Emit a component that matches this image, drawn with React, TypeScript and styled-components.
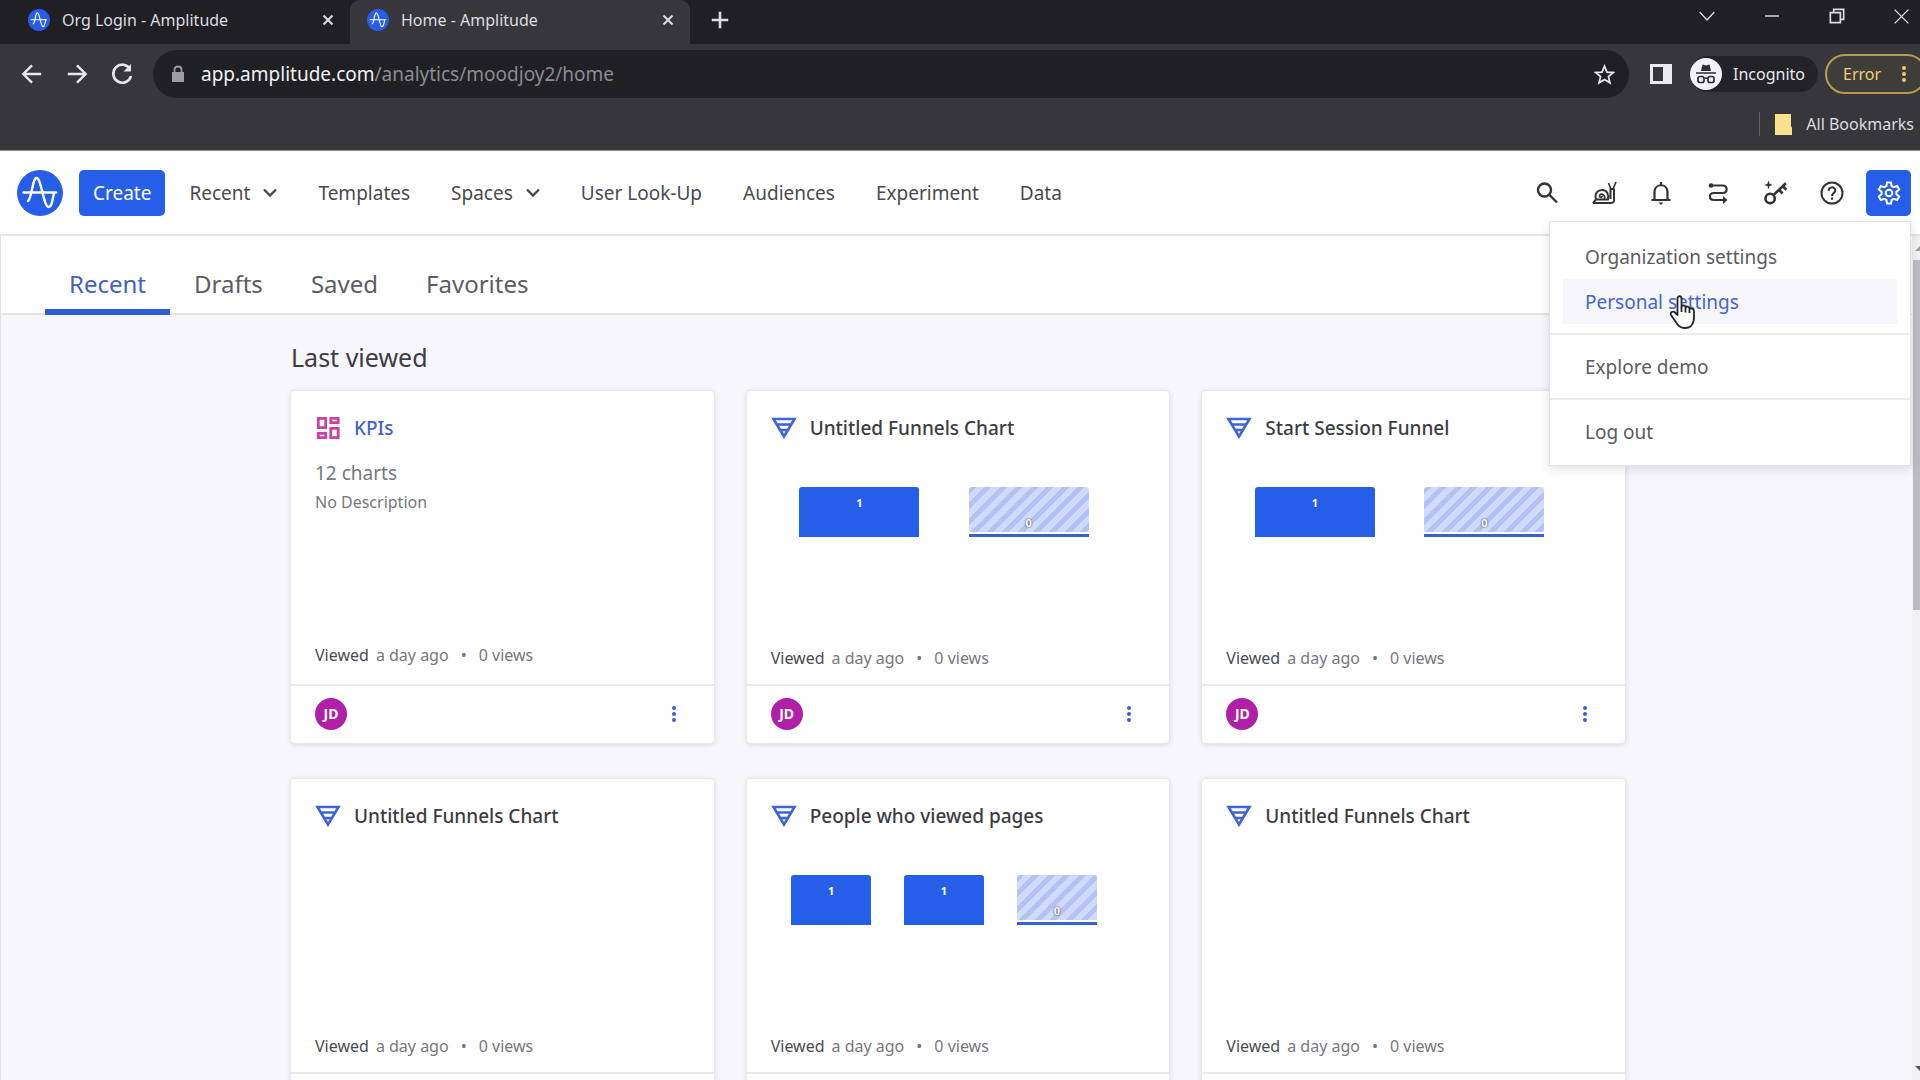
import React from "react";
import styled, { createGlobalStyle } from "styled-components";

const F = { ui: '"Noto Sans", "Open Sans", sans-serif' };

const Global = createGlobalStyle`
  * { box-sizing: border-box; }
  html, body, #root { height: 100%; }
  body { margin: 0; overflow: hidden; font-family: ${F.ui}; color: #3a3a40; }
  button { border: 0; background: none; padding: 0; margin: 0; font: inherit; color: inherit; cursor: pointer; }
  a { color: inherit; text-decoration: none; }
  h1, h2, p, ul { margin: 0; padding: 0; font-weight: 400; list-style: none; }
  svg { display: block; flex: none; }
`;

const Page = styled.div`
  display: flex;
  flex-direction: column;
  height: 100%;
  overflow: hidden;
`;

/* ---------- browser chrome ---------- */

const TabStrip = styled.div`
  display: flex;
  height: 44px;
  flex: none;
  background: #202024;
  color: #dcdce0;
`;

const BrowserTab = styled.div<{ $active?: boolean }>`
  display: flex;
  align-items: center;
  gap: 12px;
  width: ${(p) => (p.$active ? 340 : 350)}px;
  padding: 0 16px 4px ${(p) => (p.$active ? 17 : 28)}px;
  border-radius: 10px 10px 0 0;
  background: ${(p) => (p.$active ? "#37373b" : "transparent")};
  font-size: 16px;
  line-height: 24px;
`;

const TabTitle = styled.span`
  flex: 1;
  white-space: nowrap;
`;

const NewTab = styled.button`
  width: 60px;
  height: 40px;
  display: grid;
  place-items: center;
`;

const WindowControls = styled.div`
  display: flex;
  margin-left: auto;
  margin-right: -14px;
  height: 32px;
`;

const WindowButton = styled.button`
  width: 65px;
  display: grid;
  place-items: center;
`;

const Toolbar = styled.div`
  display: flex;
  align-items: center;
  flex: none;
  height: 60px;
  padding-left: 9px;
  background: #37373b;
  color: #e8e8ec;
  overflow: hidden;
`;

const NavButton = styled.button`
  width: 45px;
  height: 44px;
  display: grid;
  place-items: center;
`;

const AddressBar = styled.div`
  display: flex;
  align-items: center;
  flex: 1;
  height: 48px;
  margin-left: 9px;
  padding: 0 14px 0 18px;
  border-radius: 24px;
  background: #202024;
`;

const Address = styled.span`
  flex: 1;
  margin-left: 16px;
  font-size: 19px;
  line-height: 28px;
  color: #8b8b90;
  b { font-weight: 400; color: #f0f0f4; }
`;

const SidePanelButton = styled.button`
  width: 22px;
  margin: 0 18px 0 21px;
`;

const Incognito = styled.div`
  display: flex;
  align-items: center;
  gap: 11px;
  height: 36px;
  padding-right: 13px;
  border-radius: 18px;
  background: #232327;
  font-size: 16px;
`;

const ErrorButton = styled.button`
  display: flex;
  align-items: center;
  gap: 20px;
  flex: none;
  width: 102px;
  height: 40px;
  margin: 0 -7px 0 7px;
  padding-left: 16px;
  border: 2px solid #b99c4f;
  border-radius: 20px;
  background: #3f3d39;
  color: #f0cd77;
  font-size: 16px;
`;

const BookmarksBar = styled.div`
  display: flex;
  align-items: center;
  justify-content: flex-end;
  flex: none;
  height: 47px;
  padding: 0 6px 6px 0;
  border-bottom: 1px solid #8d8d90;
  background: #37373b;
  color: #dcdce0;
  font-size: 16px;
`;

const BookmarkFolder = styled.a`
  display: flex;
  align-items: center;
  gap: 14px;
  padding-left: 15px;
  border-left: 1px solid #66666b;
  line-height: 24px;
`;

/* ---------- application header ---------- */

const Header = styled.header`
  position: relative;
  z-index: 2;
  display: flex;
  align-items: center;
  flex: none;
  height: 85px;
  padding: 0 9px 0 17px;
  border-bottom: 2px solid #e6e6e9;
  background: #fff;
  font-size: 19px;
  line-height: 24px;
  color: #4a4a50;
`;

const CreateButton = styled.button`
  height: 46px;
  margin-left: 16px;
  padding: 0 14px;
  border-radius: 5px;
  background: #265eea;
  color: #fff;
`;

const MainNav = styled.nav`
  display: flex;
  margin-left: 24px;
  gap: 41px;
`;

const NavItem = styled.a`
  display: flex;
  align-items: center;
  gap: 13px;
  white-space: nowrap;
`;

const IconRow = styled.div`
  display: flex;
  gap: 12px;
  margin-left: auto;
`;

const IconButton = styled.button<{ $active?: boolean }>`
  display: grid;
  place-items: center;
  width: 45px;
  height: 46px;
  border-radius: 5px;
  background: ${(p) => (p.$active ? "#265eea" : "transparent")};
  color: ${(p) => (p.$active ? "#fff" : "#333338")};
`;

const Menu = styled.div`
  position: absolute;
  top: 70px;
  right: 9px;
  width: 362px;
  padding: 3px 0 2px;
  border: 1px solid #e3e3e6;
  background: #fff;
  box-shadow: 0 3px 10px rgba(40, 40, 60, 0.14);
  color: #5b5b62;
`;

const MenuGroup = styled.div`
  display: flex;
  flex-direction: column;
  padding: 9px 13px;
  & + & { border-top: 2px solid #ececef; }
`;

const MenuItem = styled.a<{ $hover?: boolean }>`
  display: flex;
  align-items: center;
  height: 45px;
  padding-left: 22px;
  background: ${(p) => (p.$hover ? "#f7f6fa" : "transparent")};
  color: ${(p) => (p.$hover ? "#4464d0" : "inherit")};
`;

const Pointer = styled.svg`
  position: absolute;
  top: 73px;
  left: 119px;
`;

/* ---------- page body ---------- */

const Body = styled.div`
  display: flex;
  flex: 1;
  min-height: 0;
`;

const Main = styled.main`
  flex: 1;
  min-width: 0;
  overflow: hidden;
  border-left: 1px solid #e3e3e6;
  background: #f7f6fb;
`;

const Tabs = styled.nav`
  display: flex;
  height: 79px;
  padding: 0 44px;
  border-bottom: 2px solid #e4e3e8;
  background: #fff;
`;

const Tab = styled.a<{ $active?: boolean }>`
  height: 79px;
  padding: 30px 24px 0;
  border-bottom: 6px solid ${(p) => (p.$active ? "#2f5fd8" : "transparent")};
  color: ${(p) => (p.$active ? "#4460c4" : "#5d5d64")};
  font-size: 24px;
  line-height: 36px;
`;

const Content = styled.section`
  padding: 24px 287px 0 290px;
`;

const Heading = styled.h1`
  font-size: 25px;
  line-height: 36px;
  margin-bottom: 16px;
  color: #3c3c44;
`;

const CardGrid = styled.div`
  display: grid;
  grid-template-columns: repeat(3, 1fr);
  gap: 36px 33px;
`;

const CardBox = styled.article`
  display: flex;
  flex-direction: column;
  border-radius: 4px;
  background: #fff;
  box-shadow: 0 0 0 1px #e8e7ec, 0 1px 5px 1px rgba(40, 40, 70, 0.12);
`;

const CardBody = styled.div<{ $kpi?: boolean }>`
  display: flex;
  flex-direction: column;
  height: 293px;
  padding: 22px 24px ${(p) => (p.$kpi ? 17 : 14)}px;
`;

const CardTitle = styled.h2<{ $link?: boolean }>`
  display: flex;
  align-items: center;
  gap: 13px;
  font-size: 19px;
  font-weight: 500;
  line-height: 30px;
  color: ${(p) => (p.$link ? "#4261cf" : "#3c3c43")};
`;

const Count = styled.p`
  margin-top: 16px;
  font-size: 19px;
  line-height: 28px;
  color: #77777d;
`;

const Description = styled.p`
  margin-top: 1px;
  font-size: 16px;
  line-height: 28px;
  color: #77777d;
`;

const Plot = styled.div`
  display: flex;
  margin: 44px 32px 0 4px;
`;

const Slot = styled.div`
  flex: 1;
  display: flex;
  justify-content: center;
`;

const Bar = styled.div<{ $empty?: boolean }>`
  display: flex;
  justify-content: center;
  align-items: ${(p) => (p.$empty ? "flex-end" : "flex-start")};
  width: 71%;
  height: 50px;
  padding: 8px 0 6px;
  border-radius: 3px 3px 0 0;
  font-size: 11px;
  line-height: 16px;
  font-weight: 700;
  color: #fff;
  background: ${(p) =>
    p.$empty
      ? "linear-gradient(to top, #3563d6 0 3px, #fff 3px 5px, transparent 5px), repeating-linear-gradient(135deg, #b3c1f5 0 5px, #d0dbfc 5px 11px)"
      : "#265eea"};
  text-shadow: ${(p) => (p.$empty ? "0 0 1px #55555c, 0 0 2px #55555c" : "none")};
`;

const Meta = styled.p`
  display: flex;
  gap: 7px;
  margin-top: auto;
  font-size: 16px;
  line-height: 24px;
  color: #77777d;
  b { font-weight: 400; color: #4b4b52; }
  i { font-style: normal; margin: 0 5px; }
`;

const CardFooter = styled.footer`
  display: flex;
  align-items: center;
  justify-content: space-between;
  height: 59px;
  padding: 0 32px 2px 24px;
  border-top: 2px solid #e9e9ec;
`;

const Avatar = styled.span`
  display: grid;
  place-items: center;
  width: 32px;
  height: 32px;
  border-radius: 50%;
  background: #b01fa8;
  color: #fff;
  font-size: 14px;
  font-weight: 700;
`;

const MoreButton = styled.button`
  display: grid;
  place-items: center;
  width: 16px;
  height: 24px;
`;

const ScrollTrack = styled.div`
  display: flex;
  flex-direction: column;
  width: 8px;
  background: #f1f1f3;
  overflow: hidden;
`;

const ScrollArrow = styled.button<{ $down?: boolean }>`
  flex: none;
  width: 16px;
  height: 24px;
  display: grid;
  place-items: center;
  margin-top: ${(p) => (p.$down ? "auto" : 0)};
  color: ${(p) => (p.$down ? "#55555a" : "#a0a0a5")};
`;

const ScrollThumb = styled.div`
  height: 350px;
  margin-left: 1px;
  background: #bcbcc0;
`;

/* ---------- drawings ---------- */

const Logo = ({ size }: { size: number }) => (
  <svg width={size} height={size} viewBox="0 0 46 46" fill="none" stroke="#fff" strokeWidth="2.4" strokeLinecap="round" strokeLinejoin="round">
    <circle cx="23" cy="23" r="23" fill="#265eea" stroke="none" />
    <path d="M6.500 22.500H39" />
    <path d="M11 31C15 28 15.500 8 19.500 8C24.500 8 26.500 37 31.500 37C35 37 35.500 29 37 23" />
  </svg>
);

const Stroke = ({ size = 24, w = 2, children }: { size?: number; w?: number; children: React.ReactNode }) => (
  <svg width={size} height={size} viewBox="0 0 24 24" fill="none" stroke="currentColor" strokeWidth={w}>
    {children}
  </svg>
);

const Close = () => (
  <Stroke size={12} w={4}><path d="M3 3L21 21M21 3L3 21" /></Stroke>
);

const Chevron = () => (
  <svg width="14" height="10" viewBox="0 0 14 10" fill="none" stroke="currentColor" strokeWidth="2.400">
    <path d="M1 1.500L7 7.500L13 1.500" />
  </svg>
);

const FunnelIcon = () => (
  <svg width="26" height="22" viewBox="0 0 26 22" fill="none" stroke="#3f63d8" strokeWidth="2.600">
    <path d="M2.500 2H23.500L13 19.500ZM5.500 7.500H20.500M8.500 13H17.500" />
  </svg>
);

const DashboardIcon = () => (
  <svg width="26" height="24" viewBox="0 0 26 24" fill="none" stroke="#c9429f" strokeWidth="2.800">
    <path d="M3.300 2.300H10.700V11.700H3.300ZM15.800 2.300H23.200V6.700H15.800ZM3.300 17.300H10.700V21.700H3.300ZM15.800 12.300H23.200V21.700H15.800Z" />
  </svg>
);

const Dots = ({ color }: { color: string }) => (
  <svg width="6" height="18" viewBox="0 0 6 18" fill={color}>
    <circle cx="3" cy="3" r="2" /><circle cx="3" cy="9" r="2" /><circle cx="3" cy="15" r="2" />
  </svg>
);

const HandPointer = () => (
  <Pointer width="27" height="34" viewBox="0 0 27 34" fill="#fff" stroke="#26262b" strokeWidth="1.800" strokeLinejoin="round">
    <path d="M8.500 20V3.500C8.500 .5 12.500 .5 12.500 3.500V12C13 9.800 16.500 10 16.500 12.500C17.500 10.800 20.500 11.500 20.500 14C22 12.800 25 13.500 25 16.500V22C25 29 21.500 33 16 33C11 33 9 30.500 6.500 26.500L2 20C.5 17.500 4 15.500 6 17.500Z" />
    <path d="M12.500 12V17M16.500 13V17.500M20.500 14.500V18" fill="none" />
  </Pointer>
);

/* ---------- content ---------- */

type Card = { title: string; bars: number[]; kpi?: boolean };

const cards: Card[] = [
  { title: "KPIs", bars: [], kpi: true },
  { title: "Untitled Funnels Chart", bars: [1, 0] },
  { title: "Start Session Funnel", bars: [1, 0] },
  { title: "Untitled Funnels Chart", bars: [] },
  { title: "People who viewed pages", bars: [1, 1, 0] },
  { title: "Untitled Funnels Chart", bars: [] },
];

const nav = [
  { label: "Recent", menu: true },
  { label: "Templates" },
  { label: "Spaces", menu: true },
  { label: "User Look-Up" },
  { label: "Audiences" },
  { label: "Experiment" },
  { label: "Data" },
];

const ChartCard = ({ card }: { card: Card }) => (
  <CardBox>
    <CardBody $kpi={card.kpi}>
      <CardTitle $link={card.kpi}>
        {card.kpi ? <DashboardIcon /> : <FunnelIcon />}
        <a href="#chart">{card.title}</a>
      </CardTitle>
      {card.kpi && (
        <>
          <Count>12 charts</Count>
          <Description>No Description</Description>
        </>
      )}
      {card.bars.length > 0 && (
        <Plot>
          {card.bars.map((value, i) => (
            <Slot key={i}><Bar $empty={value === 0}>{value}</Bar></Slot>
          ))}
        </Plot>
      )}
      <Meta><b>Viewed</b><span>a day ago</span><i>•</i><span>0 views</span></Meta>
    </CardBody>
    <CardFooter>
      <Avatar>JD</Avatar>
      <MoreButton aria-label="More options"><Dots color="#3f5fd0" /></MoreButton>
    </CardFooter>
  </CardBox>
);

export default function App() {
  return (
    <Page>
      <Global />
      <TabStrip>
        <BrowserTab>
          <Logo size={22} />
          <TabTitle>Org Login - Amplitude</TabTitle>
          <button aria-label="Close tab"><Close /></button>
        </BrowserTab>
        <BrowserTab $active>
          <Logo size={22} />
          <TabTitle>Home - Amplitude</TabTitle>
          <button aria-label="Close tab"><Close /></button>
        </BrowserTab>
        <NewTab aria-label="New tab"><Stroke size={18} w={3.5}><path d="M12 1V23M1 12H23" /></Stroke></NewTab>
        <WindowControls>
          <WindowButton aria-label="Search tabs"><Stroke size={16} w={2}><path d="M1 6L12 18L23 6" /></Stroke></WindowButton>
          <WindowButton aria-label="Minimize"><Stroke size={14} w={2.5}><path d="M0 12H24" /></Stroke></WindowButton>
          <WindowButton aria-label="Restore"><Stroke size={16} w={2.5}><path d="M2 7H17V22H2ZM7 7V2H22V17H17" /></Stroke></WindowButton>
          <WindowButton aria-label="Close window"><Stroke size={15} w={2.2}><path d="M1 1L23 23M23 1L1 23" /></Stroke></WindowButton>
        </WindowControls>
      </TabStrip>
      <Toolbar>
        <NavButton aria-label="Back"><Stroke size={22} w={2.6}><path d="M22 12H3M12 2.500L2.500 12L12 21.500" /></Stroke></NavButton>
        <NavButton aria-label="Forward"><Stroke size={22} w={2.6}><path d="M2 12H21M12 2.500L21.500 12L12 21.500" /></Stroke></NavButton>
        <NavButton aria-label="Reload"><Stroke size={24} w={2.6}><path d="M20 7A9 9 0 1 0 21 14" /><path d="M21 2V9.500H13.500Z" fill="currentColor" stroke="none" /></Stroke></NavButton>
        <AddressBar>
          <svg width="14" height="18" viewBox="0 0 14 18" fill="#9c9ca1"><path d="M1 7H13V17H1Z" /><path d="M3.500 8V4.500C3.500 .5 10.500 .5 10.500 4.500V8" fill="none" stroke="#9c9ca1" strokeWidth="1.800" /></svg>
          <Address><b>app.amplitude.com</b>/analytics/moodjoy2/home</Address>
          <button aria-label="Bookmark this page"><Stroke size={21} w={2}><path d="M12 2.500L14.800 9.200L22 9.800L16.500 14.500L18.200 21.500L12 17.700L5.800 21.500L7.500 14.500L2 9.800L9.200 9.200Z" /></Stroke></button>
        </AddressBar>
        <SidePanelButton aria-label="Side panel">
          <svg width="22" height="20" viewBox="0 0 22 20" fill="none" stroke="#ececf0"><rect x="1.500" y="1.500" width="19" height="17" strokeWidth="3" /><rect x="13" y="1" width="8" height="18" fill="#ececf0" stroke="none" /></svg>
        </SidePanelButton>
        <Incognito>
          <svg width="32" height="32" viewBox="0 0 32 32" fill="none" stroke="#2c2c31" strokeWidth="1.700">
            <circle cx="16" cy="16" r="16" fill="#f1f1f6" stroke="none" />
            <path d="M11 13L12.500 6.500L16 7.500L19.500 6.500L21 13Z" fill="#2c2c31" stroke="none" />
            <path d="M6 15H26M14.500 20.500Q16 19.500 17.500 20.500" />
            <rect x="8" y="18.500" width="6" height="6" rx="2" /><rect x="18" y="18.500" width="6" height="6" rx="2" />
          </svg>
          Incognito
        </Incognito>
        <ErrorButton>Error<Dots color="#f0cd77" /></ErrorButton>
      </Toolbar>
      <BookmarksBar>
        <BookmarkFolder href="#bookmarks">
          <svg width="17" height="21" viewBox="0 0 17 21"><path d="M0 0H16V12L17 14V21H0Z" fill="#f8e38c" /></svg>
          All Bookmarks
        </BookmarkFolder>
      </BookmarksBar>

      <Header>
        <a href="#home" aria-label="Amplitude home"><Logo size={46} /></a>
        <CreateButton>Create</CreateButton>
        <MainNav>
          {nav.map((item) => (
            <NavItem key={item.label} href="#nav">{item.label}{item.menu && <Chevron />}</NavItem>
          ))}
        </MainNav>
        <IconRow>
          <IconButton aria-label="Search"><Stroke w={2.4}><circle cx="9.500" cy="9" r="6.500" /><path d="M14 13.500L22 21.500" /></Stroke></IconButton>
          <IconButton aria-label="What's new">
            <svg width="26" height="24" viewBox="0 0 26 24" fill="none" stroke="currentColor" strokeWidth="2">
              <path d="M2 22L5 18.500C3 12 7 9 11 9C16 9 18 13 17 18.500H5M2 22H20C23 22 23.500 20 23 17V8M19.500 18V8H23.500" />
              <path d="M13.500 18C14.500 13 9 11.500 8.500 15C8.500 17 11.500 16.500 11 14.800" strokeWidth="1.700" />
              <path d="M20 8L17.500 2M22 8L25 1" strokeWidth="1.700" />
            </svg>
          </IconButton>
          <IconButton aria-label="Notifications"><Stroke w={2.2}><path d="M2.500 19H21.500M5.500 19V11C5.500 2 18.500 2 18.500 11V19M12 4.500V1" /><path d="M9.500 21.500H14.500L12 24Z" fill="currentColor" stroke="none" /></Stroke></IconButton>
          <IconButton aria-label="Switch project">
            <Stroke w={2.2}><path d="M5 4.500H16.500C22 4.500 22 12 16.500 12H8C2.500 12 2.500 19 8 19H18" /><circle cx="5" cy="4.500" r="2.300" fill="currentColor" stroke="none" /><path d="M17 15L21.500 19L17 23Z" fill="currentColor" stroke="none" /></Stroke>
          </IconButton>
          <IconButton aria-label="Keys">
            <Stroke size={26} w={2.4}><circle cx="7.500" cy="17" r="4.300" /><path d="M10.500 14L22 3M15.500 9L19 12.500M19 5.500L22.500 9" /><path d="M6 .5L7 3.500L10 4.500L7 5.500L6 8.500L5 5.500L2 4.500L5 3.500Z" fill="currentColor" stroke="none" /></Stroke>
          </IconButton>
          <IconButton aria-label="Help">
            <Stroke><circle cx="12" cy="12" r="10.500" /><path d="M8.700 9.700C8.700 5.300 15.300 5.300 15.300 9.500C15.300 12 12 12 12 15M12 16.500V18.700" /></Stroke>
          </IconButton>
          <IconButton $active aria-label="Settings">
            <Stroke><path d="M10 1.500H14L14.600 5L16.800 6.200L20.200 5L22.200 8.500L19.400 10.800V13.200L22.200 15.500L20.200 19L16.800 17.800L14.600 19L14 22.500H10L9.400 19L7.200 17.800L3.800 19L1.800 15.500L4.600 13.200V10.800L1.800 8.500L3.800 5L7.200 6.200L9.400 5Z" /><circle cx="12" cy="12" r="3.300" /></Stroke>
          </IconButton>
        </IconRow>
        <Menu>
          <MenuGroup>
            <MenuItem href="#org">Organization settings</MenuItem>
            <MenuItem href="#personal" $hover>Personal settings</MenuItem>
          </MenuGroup>
          <MenuGroup><MenuItem href="#demo">Explore demo</MenuItem></MenuGroup>
          <MenuGroup><MenuItem href="#logout">Log out</MenuItem></MenuGroup>
          <HandPointer />
        </Menu>
      </Header>

      <Body>
        <Main>
          <Tabs>
            <Tab href="#recent" $active>Recent</Tab>
            <Tab href="#drafts">Drafts</Tab>
            <Tab href="#saved">Saved</Tab>
            <Tab href="#favorites">Favorites</Tab>
          </Tabs>
          <Content>
            <Heading>Last viewed</Heading>
            <CardGrid>
              {cards.map((card, i) => <ChartCard key={i} card={card} />)}
            </CardGrid>
          </Content>
        </Main>
        <ScrollTrack>
          <ScrollArrow aria-label="Scroll up"><svg width="10" height="5" viewBox="0 0 10 5" fill="currentColor"><path d="M0 5L5 0L10 5Z" /></svg></ScrollArrow>
          <ScrollThumb />
          <ScrollArrow $down aria-label="Scroll down"><svg width="10" height="5" viewBox="0 0 10 5" fill="currentColor"><path d="M0 0L5 5L10 0Z" /></svg></ScrollArrow>
        </ScrollTrack>
      </Body>
    </Page>
  );
}
